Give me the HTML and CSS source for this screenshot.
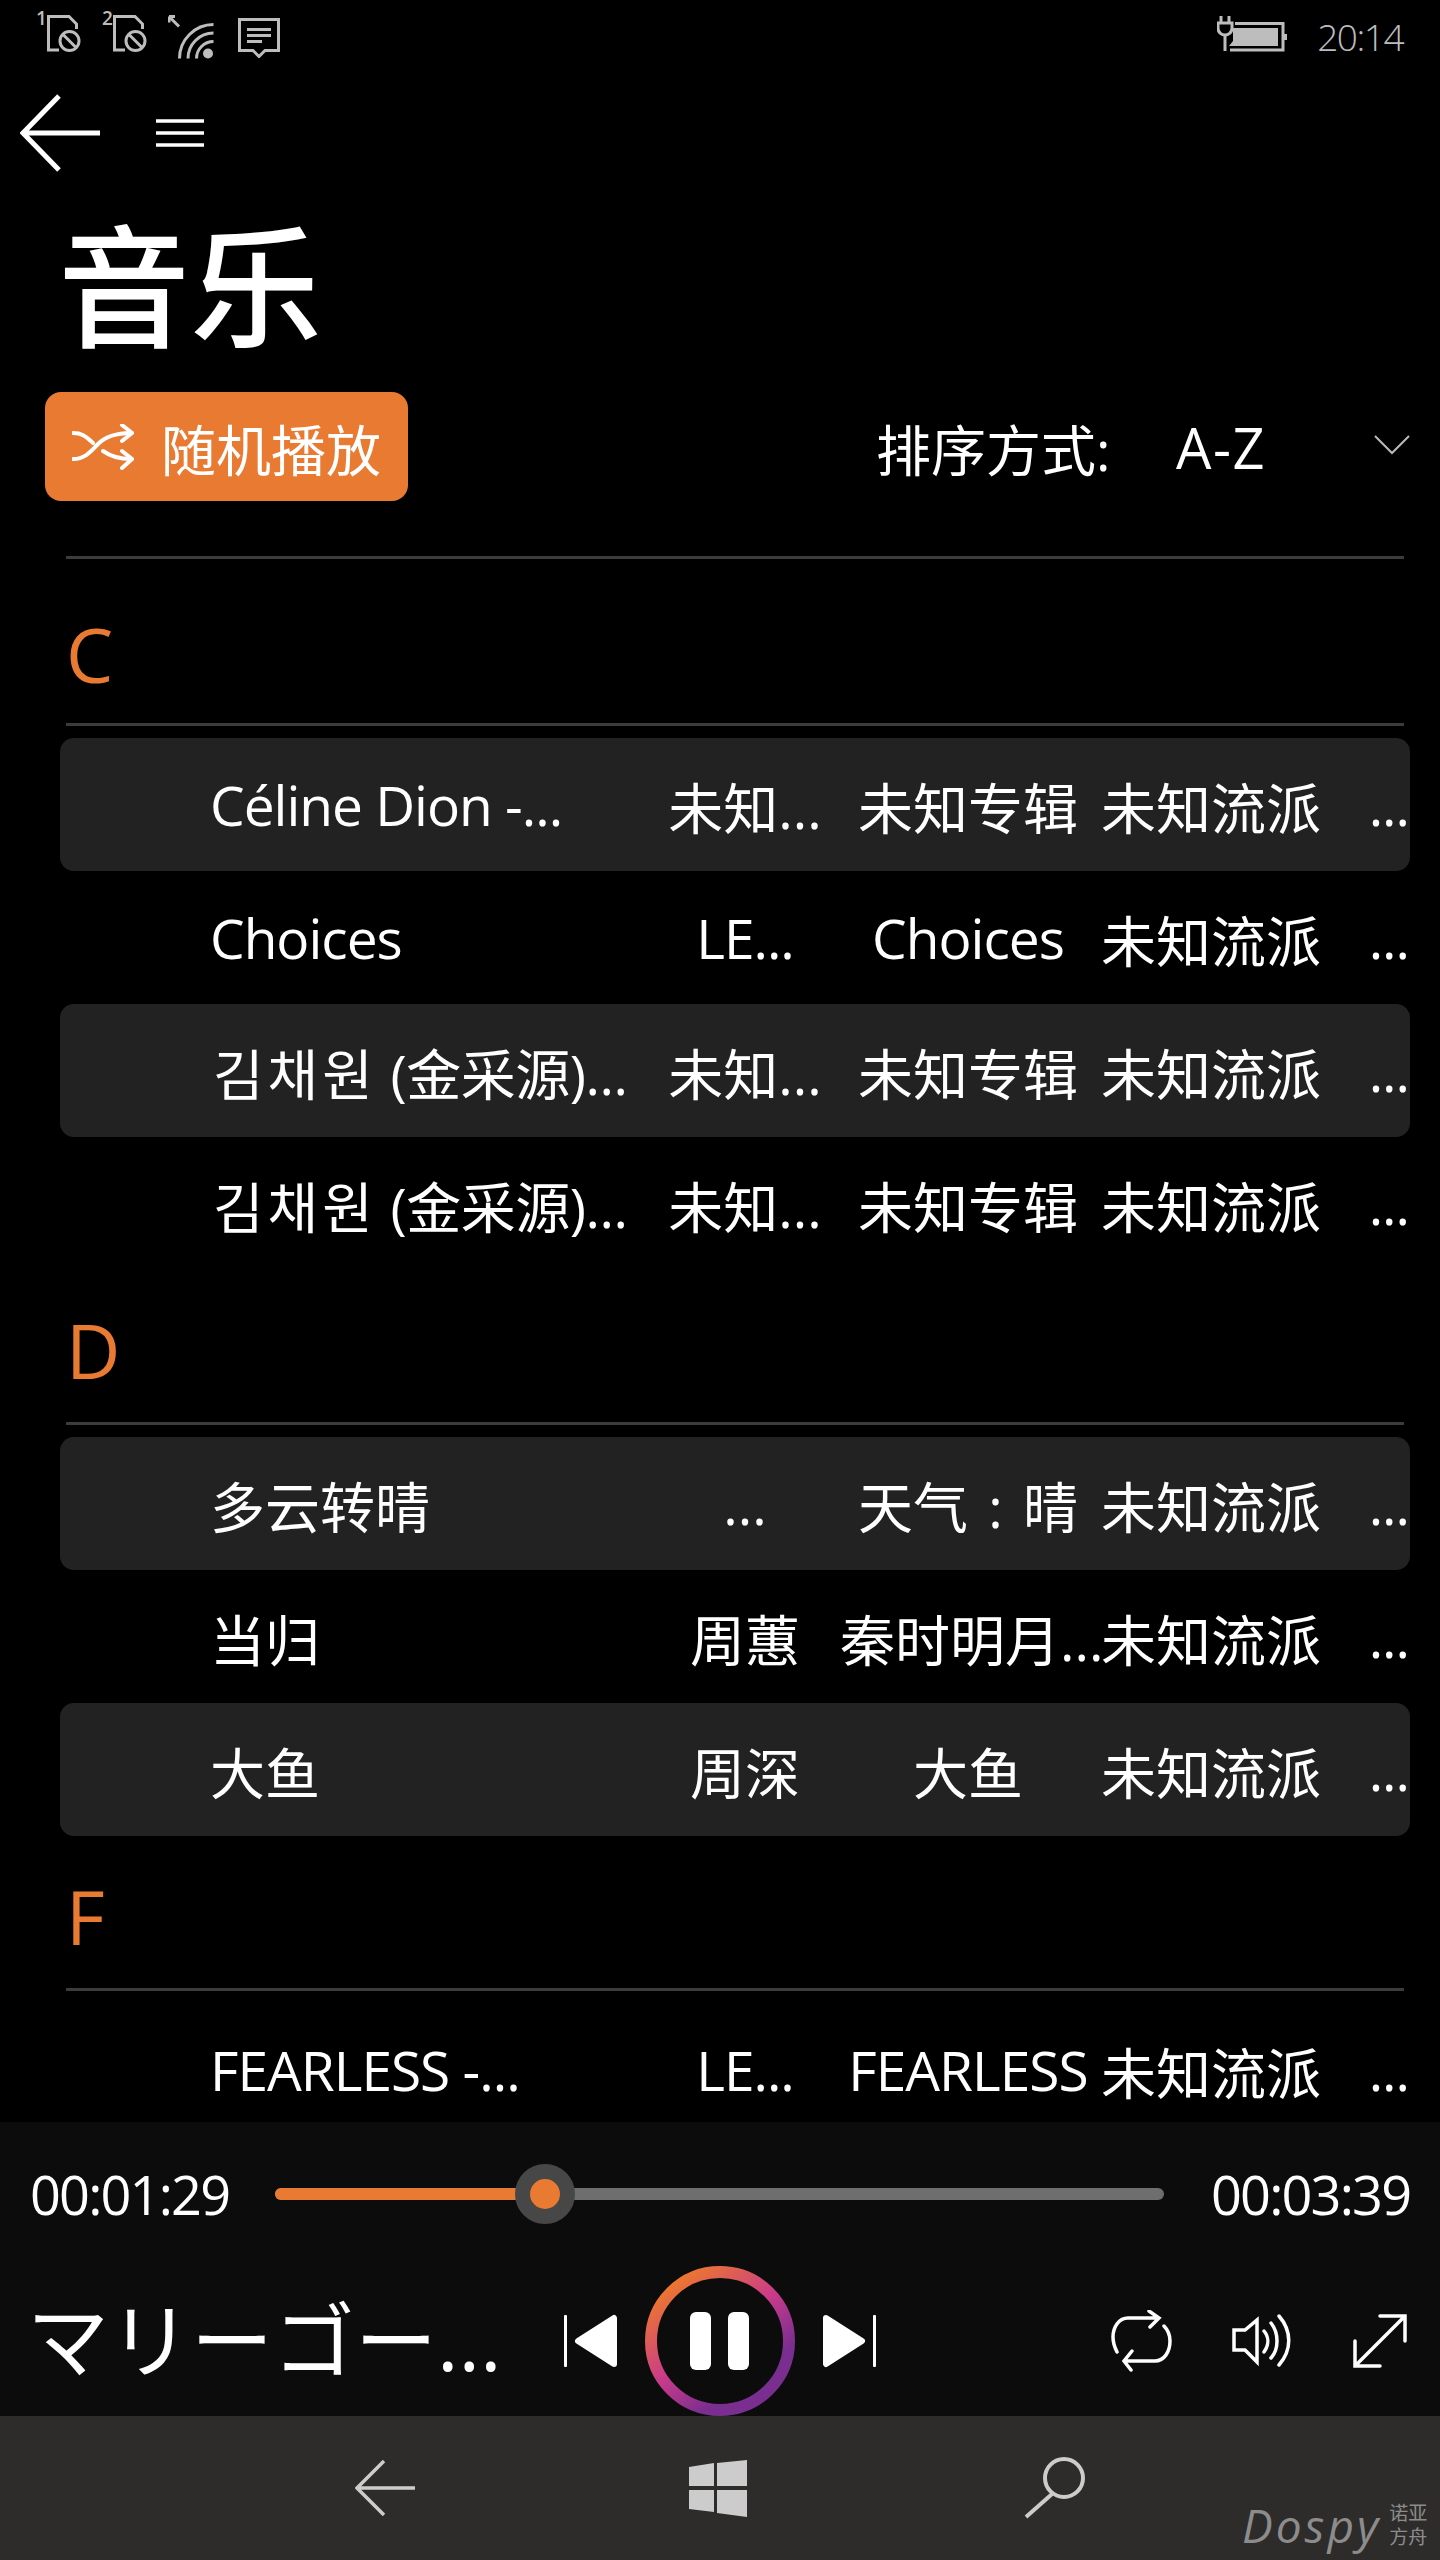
FILE: index.html
```html
<!DOCTYPE html>
<html lang="zh-CN">
<head>
    <meta charset="UTF-8">
    <meta name="viewport" content="width=device-width, initial-scale=1.0">
    <title>音乐</title>
    <link rel="stylesheet" href="styles.css">
</head>
<body>
    <div class="phone">
        <!-- status bar -->
        <div class="status-bar">
            <div class="status-sim">
                <span class="sim-num">1</span>
                <svg width="34" height="37" viewBox="0 0 34 37" class="status-icon"><path d="M12 35H1.5V1.5H22L29.5 9V14"/><circle cx="22.5" cy="26" r="9.5"/><path d="M16 19.5L29 32.5"/></svg>
            </div>
            <div class="status-sim">
                <span class="sim-num">2</span>
                <svg width="34" height="37" viewBox="0 0 34 37" class="status-icon"><path d="M12 35H1.5V1.5H22L29.5 9V14"/><circle cx="22.5" cy="26" r="9.5"/><path d="M16 19.5L29 32.5"/></svg>
            </div>
            <svg width="46" height="44" viewBox="0 0 46 44" class="status-icon"><path d="M1 1.5L11 11.5M1 1.5V7.5M1 1.5H7"/><path d="M11.5 43.5A34 34 0 0 1 45.5 9.5M20 43.5A25.500 25.500 0 0 1 45.500 18M28.500 43.500A17 17 0 0 1 45.500 26.500"/><circle cx="40" cy="38.500" r="5" class="status-fill"/></svg>
            <svg width="42" height="40" viewBox="0 0 42 40" class="status-icon status-msg"><path d="M1.500 1.500H40.500V32.500H27L21 38.500L15 32.500H1.500Z"/><path d="M9 11.500H33M9 17.500H33M9 23.500H24"/></svg>
            <div class="status-right">
                <svg width="70" height="37" viewBox="0 0 70 37" class="status-icon"><path d="M4 1V8M12 1V8M1 8H15V13C15 18 11 20 8 20C5 20 1 18 1 13ZM8 20V36"/><path d="M18 8.500H66V35H13"/><path d="M16 13H61V31H12L16 26Z" class="status-fill"/><rect x="67" y="19" width="3" height="6" class="status-fill"/></svg>
                <span class="clock">20:14</span>
            </div>
        </div>

        <!-- command bar -->
        <div class="command-bar">
            <svg width="82" height="78" viewBox="0 0 82 78" class="back-icon"><path d="M39 2L3 39L39 76M3 39H80"/></svg>
            <svg width="48" height="28" viewBox="0 0 48 28" class="menu-icon"><path d="M0 2H48M0 14H48M0 26H48"/></svg>
        </div>

        <h1 class="page-title">音乐</h1>

        <div class="toolbar">
            <button class="shuffle-btn">
                <svg width="62" height="46" viewBox="0 0 62 46" class="shuffle-icon"><path d="M1 9C12 9 15 14 21 19M31 27C38 32 46 35 59 35M1 35C14 35 20 26 26 20C34 12 46 9 59 9"/><path d="M50 1L60 9L50 17M50 27L60 35L50 44"/></svg>
                <span>随机播放</span>
            </button>
            <div class="sort-box">
                <span class="sort-label">排序方式:</span>
                <span class="sort-value">A-Z</span>
                <svg width="36" height="20" viewBox="0 0 36 20" class="chevron"><path d="M1 1L18 18L35 1"/></svg>
            </div>
        </div>

        <!-- song list -->
        <div class="song-list">
            <div class="group-head">C</div>
            <div class="song-row alt">
                <span class="song-title latin">Céline Dion -...</span>
                <span class="song-col">未知...</span>
                <span class="song-col">未知专辑</span>
                <span class="song-col">未知流派</span>
                <span class="song-last">...</span>
            </div>
            <div class="song-row">
                <span class="song-title latin">Choices</span>
                <span class="song-col latin">LE...</span>
                <span class="song-col latin">Choices</span>
                <span class="song-col">未知流派</span>
                <span class="song-last">...</span>
            </div>
            <div class="song-row alt">
                <span class="song-title korean"><span class="hangul">김채원</span> (金采源)...</span>
                <span class="song-col">未知...</span>
                <span class="song-col">未知专辑</span>
                <span class="song-col">未知流派</span>
                <span class="song-last">...</span>
            </div>
            <div class="song-row">
                <span class="song-title korean"><span class="hangul">김채원</span> (金采源)...</span>
                <span class="song-col">未知...</span>
                <span class="song-col">未知专辑</span>
                <span class="song-col">未知流派</span>
                <span class="song-last">...</span>
            </div>

            <div class="group-head">D</div>
            <div class="song-row alt">
                <span class="song-title">多云转晴</span>
                <span class="song-col">...</span>
                <span class="song-col">天气<span class="mid-colon">:</span>晴</span>
                <span class="song-col">未知流派</span>
                <span class="song-last">...</span>
            </div>
            <div class="song-row">
                <span class="song-title">当归</span>
                <span class="song-col">周蕙</span>
                <span class="song-col">秦时明月...</span>
                <span class="song-col">未知流派</span>
                <span class="song-last">...</span>
            </div>
            <div class="song-row alt">
                <span class="song-title">大鱼</span>
                <span class="song-col">周深</span>
                <span class="song-col">大鱼</span>
                <span class="song-col">未知流派</span>
                <span class="song-last">...</span>
            </div>

            <div class="group-head">F</div>
            <div class="song-row">
                <span class="song-title latin">FEARLESS -...</span>
                <span class="song-col latin">LE...</span>
                <span class="song-col latin">FEARLESS</span>
                <span class="song-col">未知流派</span>
                <span class="song-last">...</span>
            </div>
        </div>

        <!-- player -->
        <div class="player">
            <div class="progress-row">
                <span class="time">00:01:29</span>
                <div class="track">
                    <div class="track-fill" style="width: 30.4%"></div>
                    <div class="track-knob" style="left: 30.4%"></div>
                </div>
                <span class="time">00:03:39</span>
            </div>
            <div class="controls-row">
                <div class="now-title">マリーゴー...</div>
                <div class="transport">
                    <svg width="54" height="54" viewBox="0 0 54 54" class="solid-icon"><rect x="0" y="1" width="3" height="52" rx="1"/><path d="M14 27L50 4V50Z"/></svg>
                    <svg width="150" height="150" viewBox="0 0 150 150" class="play-ring">
                        <defs>
                            <linearGradient id="ring-grad" x1="0.15" y1="0.05" x2="0.8" y2="0.9">
                                <stop offset="0" stop-color="#ee7a2a"/>
                                <stop offset="0.5" stop-color="#c93b8a"/>
                                <stop offset="0.85" stop-color="#7a2e90"/>
                            </linearGradient>
                        </defs>
                        <circle cx="75" cy="75" r="69" fill="none" stroke="url(#ring-grad)" stroke-width="12"/>
                        <rect x="45" y="46" width="21" height="58" rx="6" fill="#fff"/>
                        <rect x="83" y="46" width="21" height="58" rx="6" fill="#fff"/>
                    </svg>
                    <svg width="54" height="54" viewBox="0 0 54 54" class="solid-icon"><path d="M4 4L40 27L4 50Z"/><rect x="51" y="1" width="3" height="52" rx="1"/></svg>
                </div>
                <div class="side-icons">
                    <svg width="62" height="62" viewBox="0 0 62 62" class="line-icon"><path d="M48 8H17C8 8 2 17 2 27C2 33 4 38 6 42M38 1L48 8L39 17M53 16C57 20 59 25 59 31C59 42 53 51 44 51H13M21 41L13 51L20 60"/></svg>
                    <svg width="62" height="54" viewBox="0 0 62 54" class="line-icon"><path d="M2 16H13L25 6V48L13 36H2ZM32 17C37 23 37 31 32 38M39 9C47 19 47 35 39 44M47 2C60 17 60 36 47 51"/></svg>
                    <svg width="54" height="54" viewBox="0 0 54 54" class="line-icon"><path d="M2 52L52 2M27 2H52V27M2 27V52H27"/></svg>
                </div>
            </div>
        </div>

        <!-- system nav bar -->
        <div class="nav-bar">
            <svg width="60" height="56" viewBox="0 0 60 56" class="nav-back"><path d="M29 1L2 28L29 55M2 28H60"/></svg>
            <svg width="58" height="57" viewBox="0 0 58 57" class="nav-win"><path d="M0 7L25 3V26H0ZM28 3L58 0V26H28ZM0 30H25V52L0 49ZM28 30H58V57L28 53Z"/></svg>
            <svg width="62" height="62" viewBox="0 0 62 62" class="nav-search"><circle cx="40" cy="21" r="19"/><path d="M28 37L2 60"/></svg>
            <div class="watermark">
                <span class="wm-name">Dospy</span>
                <span class="wm-cn">诺亚<br>方舟</span>
            </div>
        </div>
    </div>
</body>
</html>
```

FILE: styles.css
```css
* {
    box-sizing: border-box;
}

body {
    margin: 0;
    background: #000;
    color: #fff;
    font-family: "Open Sans", "Noto Sans CJK SC", sans-serif;
}

.phone {
    width: 1440px;
    height: 2560px;
    display: flex;
    flex-direction: column;
    overflow: hidden;
}

.status-bar {
    height: 64px;
    flex: none;
    display: flex;
    align-items: flex-start;
    gap: 21px;
    padding: 10px 37px 0 36px;
}

.status-sim {
    display: flex;
    align-items: flex-start;
    gap: 4px;
}

.sim-num {
    font-size: 19px;
    line-height: 16px;
    color: #bdbdbd;
    width: 7px;
    font-weight: 600;
}

.status-icon {
    margin-top: 5px;
    fill: none;
    stroke: #bdbdbd;
    stroke-width: 3;
}

.status-fill {
    fill: #bdbdbd;
    stroke: none;
}

.status-msg {
    margin-top: 8px;
    margin-left: 3px;
}

.status-right {
    margin-left: auto;
    display: flex;
    align-items: flex-start;
    gap: 30px;
}

.clock {
    font-size: 37px;
    line-height: 54px;
    font-weight: 300;
    letter-spacing: -1.500px;
    color: #bdbdbd;
}

.command-bar {
    height: 138px;
    flex: none;
    display: flex;
    align-items: center;
    padding-left: 20px;
}

.back-icon {
    fill: none;
    stroke: #fff;
    stroke-width: 5;
}

.menu-icon {
    margin-left: 54px;
    fill: none;
    stroke: #fff;
    stroke-width: 3.500;
}

.page-title {
    height: 190px;
    flex: none;
    margin: 0;
    padding-left: 58px;
    font-size: 132px;
    line-height: 168px;
    font-weight: 500;
}

.toolbar {
    height: 167px;
    flex: none;
    margin: 0 30px 0 45px;
    display: flex;
    align-items: flex-start;
    justify-content: space-between;
    position: relative;
}

.toolbar::after {
    content: "";
    position: absolute;
    left: 21px;
    right: 6px;
    bottom: 0;
    height: 3px;
    background: #3c3c3c;
}

.shuffle-btn {
    width: 363px;
    height: 109px;
    display: flex;
    align-items: center;
    gap: 27px;
    padding: 0 0 0 27px;
    border: none;
    border-radius: 16px;
    background: #e97a32;
    color: #fff;
    font-family: inherit;
    font-size: 55px;
}

.shuffle-icon {
    fill: none;
    stroke: #fff;
    stroke-width: 4;
    stroke-linecap: round;
}

.sort-box {
    display: flex;
    align-items: center;
    height: 109px;
}

.sort-label {
    width: 300px;
    font-size: 55px;
}

.sort-value {
    width: 198px;
    font-size: 56px;
    letter-spacing: 1.500px;
}

.chevron {
    fill: none;
    stroke: #bbb;
    stroke-width: 2;
    margin-top: -4px;
}

.song-list {
    flex: 1;
    min-height: 0;
    overflow: hidden;
    padding: 15px 30px 0 60px;
}

.group-head {
    height: 155px;
    margin: 0 6px 12px 6px;
    padding-top: 8px;
    border-bottom: 3px solid #3c3c3c;
    color: #e97a32;
    font-size: 75px;
    line-height: 144px;
}

.song-list > .group-head:first-child {
    height: 152px;
}

.song-row {
    height: 133px;
    display: grid;
    grid-template-columns: 590px 190px 256px 230px 84px;
    align-items: center;
    font-size: 55px;
    white-space: nowrap;
    border-radius: 14px;
}

.song-row.alt {
    background: #222;
}

.song-title {
    padding-left: 150px;
}

.song-title.korean {
    padding-left: 153px;
    letter-spacing: -0.500px;
}

.hangul {
    letter-spacing: 4px;
}

.latin {
    letter-spacing: -1px;
}

.mid-colon {
    display: inline-block;
    width: 1em;
    text-align: center;
}

.song-col {
    text-align: center;
}

.song-last {
    text-align: right;
    padding-right: 1px;
    letter-spacing: -1px;
}

.player {
    height: 294px;
    flex: none;
    background: #0c0c0c;
    padding: 0 31px 0 30px;
}

.progress-row {
    height: 144px;
    display: flex;
    align-items: center;
    gap: 47px;
}

.time {
    width: 198px;
    font-size: 54px;
    letter-spacing: -1.800px;
    white-space: nowrap;
}

.track {
    flex: 1;
    height: 12px;
    border-radius: 6px;
    background: #6e6e6e;
    position: relative;
}

.track-fill {
    height: 12px;
    border-radius: 6px;
    background: #e97a32;
}

.track-knob {
    position: absolute;
    top: -24px;
    width: 60px;
    height: 60px;
    margin-left: -30px;
    border: 15px solid #474747;
    border-radius: 50%;
    background: #e97a32;
}

.controls-row {
    height: 150px;
    display: flex;
    align-items: center;
}

.now-title {
    width: 537px;
    flex: none;
    margin: -4px 0 0 -3px;
    font-size: 82px;
    line-height: 110px;
    white-space: nowrap;
}

.transport {
    display: flex;
    align-items: center;
    gap: 27px;
}

.solid-icon {
    fill: #fff;
}

.solid-icon path {
    stroke: #fff;
    stroke-width: 6;
    stroke-linejoin: round;
}

.side-icons {
    margin-left: auto;
    margin-right: 2px;
    display: flex;
    align-items: center;
    gap: 59px;
}

.line-icon {
    fill: none;
    stroke: #fff;
    stroke-width: 3.500;
    stroke-linecap: round;
}

.nav-bar {
    height: 144px;
    flex: none;
    background: #2d2c2b;
    display: flex;
    align-items: center;
    padding-left: 355px;
    position: relative;
}

.nav-back {
    fill: none;
    stroke: #ccc;
    stroke-width: 3.500;
}

.nav-win {
    margin-left: 274px;
    fill: #ccc;
}

.nav-search {
    margin-left: 277px;
    fill: none;
    stroke: #ccc;
    stroke-width: 4;
}

.watermark {
    position: absolute;
    left: 1242px;
    top: 84px;
    display: flex;
    align-items: center;
    gap: 8px;
    color: #8c8c8c;
}

.wm-name {
    font-size: 46px;
    font-style: italic;
    letter-spacing: 3px;
    line-height: 50px;
}

.wm-cn {
    font-size: 19px;
    line-height: 24px;
    width: 40px;
}
```
